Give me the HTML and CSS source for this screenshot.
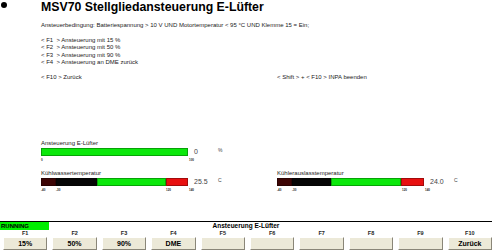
FILE: index.html
```html
<!DOCTYPE html>
<html lang="de">

<head>
    <meta charset="UTF-8">
    <title>MSV70 Stellgliedansteuerung E-Lüfter</title>
    <link rel="stylesheet" href="styles.css">
</head>

<body>
    <div class="screen">
        <div class="main">
            <div class="title-row">
                <span class="dot"></span>
                <h1 class="title">MSV70 Stellgliedansteuerung E-Lüfter</h1>
            </div>

            <div class="content">
                <p class="condition">Ansteuerbedingung: Batteriespannung &gt; 10 V UND Motortemperatur &lt; 95 °C UND Klemme 15 = Ein;</p>

                <ul class="keys">
                    <li>&lt; F1  &gt; Ansteuerung mit 15 %</li>
                    <li>&lt; F2  &gt; Ansteuerung mit 50 %</li>
                    <li>&lt; F3  &gt; Ansteuerung mit 90 %</li>
                    <li>&lt; F4  &gt; Ansteuerung an DME zurück</li>
                </ul>

                <div class="cols exit">
                    <span>&lt; F10 &gt; Zurück</span>
                    <span>&lt; Shift &gt; + &lt; F10 &gt; INPA beenden</span>
                </div>

                <!-- Ansteuerung -->
                <div class="gauge gauge-first">
                    <div class="gauge-label">Ansteuerung E-Lüfter</div>
                    <div class="gauge-row">
                        <div class="bar">
                            <span class="seg green" style="width: 147px"></span>
                        </div>
                        <span class="gauge-value">0</span>
                        <span class="gauge-unit">%</span>
                    </div>
                    <div class="scale">
                        <span style="width: 148px">0</span>
                        <span>100</span>
                    </div>
                </div>

                <!-- Temperaturen -->
                <div class="cols gauges">
                    <div class="gauge">
                        <div class="gauge-label">Kühlwassertemperatur</div>
                        <div class="gauge-row">
                            <div class="bar">
                                <span class="seg dark" style="width: 15px"></span>
                                <span class="seg black" style="width: 41px"></span>
                                <span class="seg green" style="width: 69px"></span>
                                <span class="seg red" style="width: 22px"></span>
                            </div>
                            <span class="gauge-value">25.5</span>
                            <span class="gauge-unit">C</span>
                        </div>
                        <div class="scale">
                            <span style="width: 15px">-40</span>
                            <span style="width: 110px">-30</span>
                            <span style="width: 23px">120</span>
                            <span>140</span>
                        </div>
                    </div>

                    <div class="gauge">
                        <div class="gauge-label">Kühlerauslasstemperatur</div>
                        <div class="gauge-row">
                            <div class="bar">
                                <span class="seg dark" style="width: 15px"></span>
                                <span class="seg black" style="width: 39px"></span>
                                <span class="seg green" style="width: 70px"></span>
                                <span class="seg red" style="width: 23px"></span>
                            </div>
                            <span class="gauge-value">24.0</span>
                            <span class="gauge-unit">C</span>
                        </div>
                        <div class="scale">
                            <span style="width: 15px">-40</span>
                            <span style="width: 110px">-30</span>
                            <span style="width: 23px">120</span>
                            <span>140</span>
                        </div>
                    </div>
                </div>
            </div>
        </div>

        <div class="status">
            <span class="running">RUNNING</span>
            <span class="status-title">Ansteuerung E-Lüfter</span>
            <span></span>
        </div>

        <div class="fkeys">
            <div class="fkey"><span class="fkey-name">F1</span><button class="fkey-btn">15%</button></div>
            <div class="fkey"><span class="fkey-name">F2</span><button class="fkey-btn">50%</button></div>
            <div class="fkey"><span class="fkey-name">F3</span><button class="fkey-btn">90%</button></div>
            <div class="fkey"><span class="fkey-name">F4</span><button class="fkey-btn">DME</button></div>
            <div class="fkey"><span class="fkey-name">F5</span><button class="fkey-btn"></button></div>
            <div class="fkey"><span class="fkey-name">F6</span><button class="fkey-btn"></button></div>
            <div class="fkey"><span class="fkey-name">F7</span><button class="fkey-btn"></button></div>
            <div class="fkey"><span class="fkey-name">F8</span><button class="fkey-btn"></button></div>
            <div class="fkey"><span class="fkey-name">F9</span><button class="fkey-btn"></button></div>
            <div class="fkey"><span class="fkey-name">F10</span><button class="fkey-btn">Zurück</button></div>
        </div>
    </div>
</body>

</html>
```

FILE: styles.css
```css
body {
    margin: 0;
    font-family: "Liberation Sans", Arial, sans-serif;
    background-color: #fff;
    color: #222;
}

.screen {
    width: 492px;
    height: 250px;
    display: flex;
    flex-direction: column;
    overflow: hidden;
}

.main {
    flex: 1;
    min-height: 0;
}

/* Kopfzeile */
.title-row {
    display: flex;
    align-items: flex-start;
    height: 14px;
}

.dot {
    width: 6px;
    height: 6px;
    border-radius: 50%;
    background-color: #000;
    margin: 2px 0 0 1px;
}

.title {
    margin: 0 0 0 34px;
    font-size: 12.3px;
    line-height: 14px;
    font-weight: bold;
    color: #000;
}

.content {
    padding-left: 41px;
    font-size: 6px;
    line-height: 7px;
}

.condition {
    margin: 7.5px 0 0;
}

.keys {
    list-style: none;
    margin: 8.5px 0 0;
    padding: 0;
    line-height: 7.3px;
}

.keys li {
    white-space: pre;
}

.cols {
    display: grid;
    grid-template-columns: 236px auto;
}

.exit {
    margin-top: 7.8px;
}

.exit span {
    white-space: pre;
}

/* Anzeigen */
.gauge-first {
    margin-top: 59px;
}

.gauges {
    margin-top: 7.8px;
}

.gauge-label {
    line-height: 7px;
}

.gauge-row {
    display: flex;
    align-items: flex-start;
    margin-top: 1.5px;
}

.bar {
    display: flex;
    width: 147px;
    height: 7.5px;
}

.seg {
    height: 100%;
    box-shadow: inset 0 0 0 1px rgba(0, 0, 0, 0.3);
}

.seg.green {
    background-color: #0be80b;
}

.seg.red {
    background-color: #e81010;
}

.seg.black {
    background-color: #060606;
}

.seg.dark {
    background-color: #3c0505;
}

.gauge-value {
    margin-left: 6px;
    width: 24px;
    font-size: 7px;
    line-height: 8px;
    color: #444;
}

.gauge-unit {
    font-size: 5px;
    line-height: 5px;
    color: #444;
}

.scale {
    display: flex;
    margin-top: 1.5px;
    font-size: 3px;
    line-height: 4px;
    font-weight: bold;
}

.scale span {
    flex: none;
}

/* Statuszeile */
.status {
    display: grid;
    grid-template-columns: 1fr auto 1fr;
    height: 8px;
    border-top: 1px solid #000;
}

.running {
    width: 49px;
    padding-left: 1px;
    box-sizing: border-box;
    background-color: #00ee00;
    font-size: 6px;
    line-height: 8px;
    font-weight: bold;
    color: #000;
}

.status-title {
    font-size: 6.5px;
    line-height: 8px;
    font-weight: bold;
    color: #000;
}

/* Funktionstasten */
.fkeys {
    display: grid;
    grid-template-columns: repeat(10, 1fr);
    column-gap: 5px;
    padding-left: 3px;
    height: 20px;
}

.fkey {
    display: flex;
    flex-direction: column;
}

.fkey-name {
    text-align: center;
    font-size: 5.5px;
    line-height: 7px;
    font-weight: bold;
    color: #222;
}

.fkey-btn {
    height: 13px;
    margin: 0;
    padding: 0;
    font-family: "Liberation Sans", Arial, sans-serif;
    font-size: 7px;
    line-height: 11px;
    font-weight: bold;
    color: #000;
    background-color: #ece9d8;
    border: 1px solid;
    border-color: #fff #8a8678 #8a8678 #fff;
}
```
